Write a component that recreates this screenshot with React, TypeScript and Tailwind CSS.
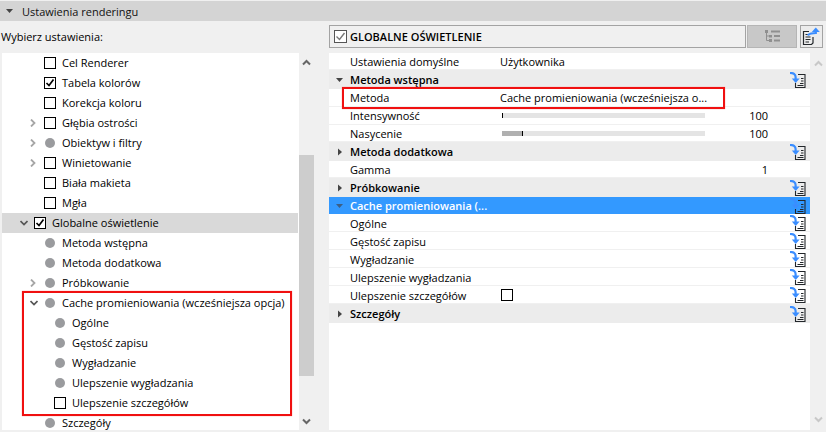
import React from "react";

const font = "[font-family:'Open_Sans','Liberation_Sans',sans-serif]";

function Box({ checked, className = "" }: { checked?: boolean; className?: string }) {
  return (
    <span className={`flex h-[12px] w-[12px] shrink-0 items-center justify-center border border-black bg-white ${className}`}>
      {checked && (
        <svg width="10" height="10" viewBox="0 0 10 10">
          <path d="M1.5 5 L4 7.5 L8.5 1.5" fill="none" stroke="#000" strokeWidth="1.7" />
        </svg>
      )}
    </span>
  );
}

function Dot() {
  return <span className="h-[10px] w-[10px] shrink-0 rounded-full bg-[#9a9b9e]" />;
}

function Chevron({ dir }: { dir?: "right" | "down" }) {
  if (!dir) return <span className="h-[8px] w-[8px] shrink-0" />;
  return (
    <svg width="8" height="8" viewBox="0 0 8 8" className="shrink-0">
      {dir === "right" ? (
        <path d="M1 0.5 L4.5 4 L1 7.5" fill="none" stroke="#a6a6a6" strokeWidth="1.8" />
      ) : (
        <path d="M0.5 2 L4 5.5 L7.5 2" fill="none" stroke="#555" strokeWidth="1.7" />
      )}
    </svg>
  );
}

type TreeItem = { label: string; kind: "box" | "check" | "dot"; chev?: "right" | "down"; indent?: number; selected?: boolean };

const tree: TreeItem[] = [
  { label: "Cel Renderer", kind: "box" },
  { label: "Tabela kolorów", kind: "check" },
  { label: "Korekcja koloru", kind: "box" },
  { label: "Głębia ostrości", kind: "box", chev: "right" },
  { label: "Obiektyw i filtry", kind: "dot", chev: "right" },
  { label: "Winietowanie", kind: "box", chev: "right" },
  { label: "Biała makieta", kind: "box" },
  { label: "Mgła", kind: "box" },
  { label: "Globalne oświetlenie", kind: "check", chev: "down", indent: -10, selected: true },
  { label: "Metoda wstępna", kind: "dot" },
  { label: "Metoda dodatkowa", kind: "dot" },
  { label: "Próbkowanie", kind: "dot", chev: "right" },
  { label: "Cache promieniowania (wcześniejsza opcja)", kind: "dot", chev: "down" },
  { label: "Ogólne", kind: "dot", indent: 10 },
  { label: "Gęstość zapisu", kind: "dot", indent: 10 },
  { label: "Wygładzanie", kind: "dot", indent: 10 },
  { label: "Ulepszenie wygładzania", kind: "dot", indent: 10 },
  { label: "Ulepszenie szczegółów", kind: "box", indent: 10 },
  { label: "Szczegóły", kind: "dot" },
];

function TreeRow({ item }: { item: TreeItem }) {
  const base = 28 + (item.indent ?? 0);
  return (
    <div
      className={`flex h-[20px] shrink-0 items-center ${item.selected ? "mr-[1px] bg-[#d9d9d9]" : ""}`}
      style={{ paddingLeft: base }}
    >
      <Chevron dir={item.chev} />
      <span className="ml-[5px] flex w-[13px] shrink-0 justify-center">
        {item.kind === "dot" ? <Dot /> : <Box checked={item.kind === "check"} />}
      </span>
      <span className="ml-[6px] whitespace-nowrap pb-[2px]">{item.label}</span>
    </div>
  );
}

function RowIcon() {
  return (
    <svg width="16" height="16" viewBox="0 0 16 16" className="shrink-0">
      <path d="M8 2.5 H15 V15.5 H5.5 V11" fill="none" stroke="#23272b" strokeWidth="1.1" />
      <path d="M11 6.5 H13.5 M11 9 H13.5 M10 11.5 H13.5 M7.5 13.5 H13.5" stroke="#23272b" strokeWidth="1" />
      <path d="M0 1 C3.5 1 5.6 2 5.6 5 L5.6 7" fill="none" stroke="#3a8dff" strokeWidth="2.2" />
      <path d="M1.8 6.5 H9.6 L5.7 11 Z" fill="#3a8dff" />
    </svg>
  );
}

function Arrow({ open, light }: { open?: boolean; light?: boolean }) {
  const c = light ? "#3d5f85" : "#444";
  return (
    <svg width="8" height="8" viewBox="0 0 8 8" className="shrink-0">
      {open ? <path d="M0 2 H7 L3.5 6 Z" fill={c} /> : <path d="M2 0.5 L6 4 L2 7.5 Z" fill={c} />}
    </svg>
  );
}

function Section({ label, open, active }: { label: string; open?: boolean; active?: boolean }) {
  return (
    <div
      className={`flex items-center pl-[7px] pr-[4px] font-semibold ${active ? "h-[17px] bg-[#3399ff] text-white" : "h-[19px] bg-[#ececec] text-black"}`}
    >
      <Arrow open={open} light={active} />
      <span className="ml-[6px] flex-1 whitespace-nowrap">{label}</span>
      <RowIcon />
    </div>
  );
}

function Prop({ label, value, end, slider, box, icon = true, h = "h-[18px]" }: {
  label: string; value?: string; end?: string; slider?: number; box?: boolean; icon?: boolean; h?: string;
}) {
  return (
    <div className={`flex ${h} items-center border-b border-[#f0f0f0] pl-[21px] pr-[4px]`}>
      <span className={`w-[150px] shrink-0 whitespace-nowrap ${icon ? "pt-[2px]" : ""}`}>{label}</span>
      <div className="flex flex-1 items-center">
        {value && <span className="whitespace-nowrap">{value}</span>}
        {box && <Box className="ml-[1px]" />}
        {slider !== undefined && (
          <span className="relative ml-[2px] h-[5px] w-[203px] shrink-0 bg-[#e4e4e4]">
            <span className="block h-full bg-[#b0b0b0]" style={{ width: slider }} />
            <span className="absolute top-0 h-full w-[1px] bg-black" style={{ left: slider }} />
          </span>
        )}
        {end && <span className="ml-auto mr-[38px] whitespace-nowrap">{end}</span>}
      </div>
      {icon && <RowIcon />}
    </div>
  );
}

function ScrollUp({ color }: { color: string }) {
  return (
    <svg width="9" height="7" viewBox="0 0 9 7">
      <path d="M1 5.5 L4.5 2 L8 5.5" fill="none" stroke={color} strokeWidth="2" />
    </svg>
  );
}
function ScrollDown({ color }: { color: string }) {
  return (
    <svg width="9" height="7" viewBox="0 0 9 7">
      <path d="M1 1.5 L4.5 5 L8 1.5" fill="none" stroke={color} strokeWidth="2" />
    </svg>
  );
}

export default function App() {
  return (
    <div className={`${font} relative h-[432px] w-[826px] overflow-hidden bg-[#f0f0f0] text-[11px] leading-none text-black`}>
      <div className="h-[1px] bg-[#f0f0f0]" />
      <div className="flex h-[20px] items-center bg-[#d4d4d4] pl-[6px]">
        <Arrow open />
        <span className="ml-[8px] text-[#111]">Ustawienia renderingu</span>
      </div>
      <div className="flex">
        <div className="w-[329px] shrink-0">
          <div className="flex h-[32px] items-center pb-[1px] pl-[1px]">Wybierz ustawienia:</div>
          <div className="ml-[2px] flex h-[377px] w-[312px]">
            <div className="flex h-full w-[297px] flex-col overflow-hidden bg-white">
              {tree.map((t) => (
                <TreeRow key={t.label} item={t} />
              ))}
            </div>
            <div className="flex w-[15px] flex-col bg-[#f0f0f0]">
              <div className="flex h-[102px] justify-center pt-[6px]"><ScrollUp color="#666" /></div>
              <div className="h-[221px] bg-[#cdcdcd]" />
              <div className="flex flex-1 items-end justify-center pb-[5px]"><ScrollDown color="#666" /></div>
            </div>
          </div>
        </div>
        <div className="flex-1">
          <div className="flex h-[32px] pt-[4px]">
            <div className="flex h-[23px] w-[417px] items-center gap-[3px] border border-[#a3a3a3] bg-[#f0f0f0] pl-[4px] text-[11px] font-semibold">
              <svg width="13" height="13" viewBox="0 0 13 13" className="shrink-0">
                <rect x="0.5" y="0.5" width="12" height="12" fill="#fff" stroke="#555" />
                <path d="M2.5 6.5 L5.5 9.5 L10.5 3" fill="none" stroke="#777" strokeWidth="1.4" />
              </svg>
              <span className="whitespace-nowrap">GLOBALNE OŚWIETLENIE</span>
            </div>
            <button className="ml-[1px] flex h-[23px] w-[50px] items-center justify-center border border-[#b5b5b5] bg-[#c8c8c8]">
              <svg width="17" height="13" viewBox="0 0 17 13">
                <path d="M1 0 H4 V3 H1 Z M5 9 H8 V12 H5 Z M5 5 H8 V7.5 H5 Z" fill="#8f8f8f" />
                <path d="M7 1.5 H16 M10 6 H16 M10 10.5 H16" stroke="#8f8f8f" strokeWidth="2" />
                <path d="M2.5 3 V10.5 H5 M2.5 6 H5" stroke="#8f8f8f" strokeWidth="1" fill="none" />
              </svg>
            </button>
            <button className="ml-[3px] h-[23px] w-[23px] border border-[#a3a3a3] bg-[#ececec]">
              <svg width="21" height="21" viewBox="0 0 21 21" className="block">
                <path d="M8 5.5 H2.5 V18.5 H10.5 L12 17 V11" fill="none" stroke="#23272b" strokeWidth="1.2" />
                <path d="M4.5 8.5 H7 M4.5 11 H9.5 M4.5 13.5 H9.5 M4.5 16 H8" stroke="#23272b" strokeWidth="1" />
                <path d="M7 9.5 C8 7 11 7.5 14.8 7 L14.8 5" fill="none" stroke="#3a8dff" strokeWidth="2.2" />
                <path d="M14.8 1.5 L18.8 6 H10.8 Z" fill="#3a8dff" />
              </svg>
            </button>
          </div>
          <div className="flex h-[377px]">
            <div className="w-[481px] bg-white">
              <Prop label="Ustawienia domyślne" value="Użytkownika" icon={false} h="h-[17px]" />
              <Section label="Metoda wstępna" open />
              <Prop label="Metoda" value="Cache promieniowania (wcześniejsza o..." icon={false} />
              <Prop label="Intensywność" slider={0} end="100" icon={false} />
              <Prop label="Nasycenie" slider={20} end="100" icon={false} h="h-[17px]" />
              <Section label="Metoda dodatkowa" />
              <Prop label="Gamma" end="1" icon={false} h="h-[17px]" />
              <Section label="Próbkowanie" />
              <Section label="Cache promieniowania (..." open active />
              <Prop label="Ogólne" />
              <Prop label="Gęstość zapisu" />
              <Prop label="Wygładzanie" />
              <Prop label="Ulepszenie wygładzania" />
              <Prop label="Ulepszenie szczegółów" box />
              <Section label="Szczegóły" />
            </div>
            <div className="flex w-[16px] flex-col items-center justify-between bg-[#f0f0f0] py-[7px]">
              <ScrollUp color="#c8c8c8" />
              <ScrollDown color="#c8c8c8" />
            </div>
          </div>
        </div>
      </div>
      {/* red annotation frames */}
      <div className="absolute left-[22px] top-[291px] h-[125px] w-[270px] border-2 border-[#f01010] shadow-[0_0_1px_#ff8080]" />
      <div className="absolute left-[342px] top-[87px] h-[22px] w-[383px] border-2 border-[#f01010] shadow-[0_0_1px_#ff8080]" />
    </div>
  );
}
